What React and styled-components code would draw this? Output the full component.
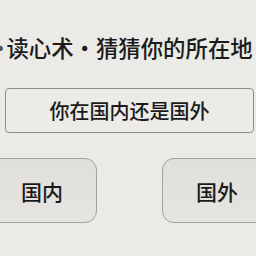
import styled, { createGlobalStyle } from "styled-components";

const GlobalStyle = createGlobalStyle`
  html, body {
    margin: 0;
    padding: 0;
    background: #eceae7;
  }
`;

const Page = styled.div`
  width: 256px;
  height: 256px;
  overflow: hidden;
  display: flex;
  flex-direction: column;
  background: #eceae7;
  font-family: "Noto Sans CJK SC", "Noto Sans", sans-serif;
  color: #1b1b1b;
`;

const Title = styled.h1`
  margin: 36px 0 0 -11px;
  height: 22px;
  font-size: 22.4px;
  line-height: 22px;
  font-weight: 500;
  white-space: nowrap;
`;

const LeadDot = styled.span`
  margin-right: -5px;
  color: #555;
`;

const Question = styled.div`
  box-sizing: border-box;
  margin: 30px 2px 0 5px;
  height: 45px;
  display: flex;
  align-items: center;
  justify-content: center;
  border: 1.5px solid #8f8e8c;
  border-radius: 4px;
  background: #ecebe8;
  font-size: 20px;
  font-weight: 500;
`;

const Choices = styled.div`
  margin: 25px 0 0 -13px;
  display: flex;
  gap: 65px;
`;

const Choice = styled.button`
  box-sizing: border-box;
  flex: none;
  width: 110px;
  height: 65px;
  padding: 0;
  border: 1.5px solid #a3a19e;
  border-radius: 12px;
  background: linear-gradient(#e1dfdb, #e6e4e0);
  font-family: inherit;
  font-size: 21px;
  font-weight: 500;
  color: #1b1b1b;
`;

export default function App() {
  return (
    <Page>
      <GlobalStyle />
      <Title>
        <LeadDot>・</LeadDot>读心术・猜猜你的所在地
      </Title>
      <Question>你在国内还是国外</Question>
      <Choices>
        <Choice>国内</Choice>
        <Choice>国外</Choice>
      </Choices>
    </Page>
  );
}
